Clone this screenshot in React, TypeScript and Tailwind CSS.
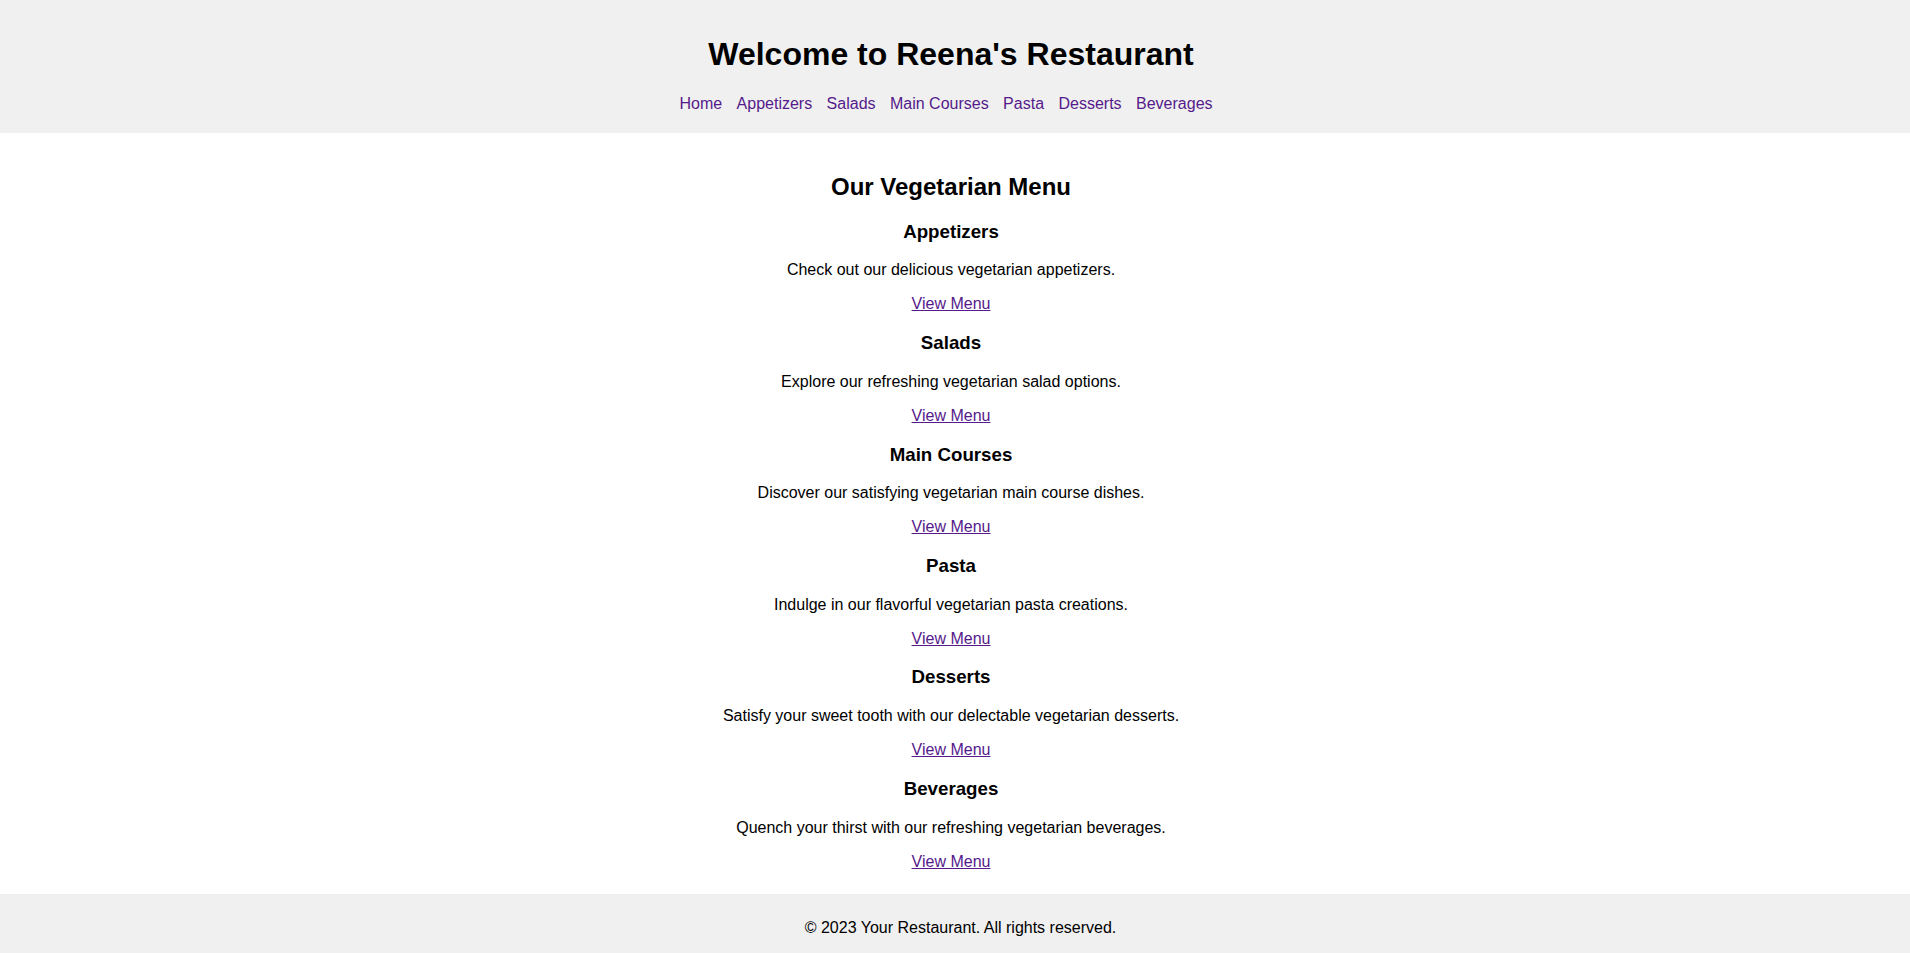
import React from "react";

const navItems = [
  "Home",
  "Appetizers",
  "Salads",
  "Main Courses",
  "Pasta",
  "Desserts",
  "Beverages",
];

const sections = [
  { title: "Appetizers", text: "Check out our delicious vegetarian appetizers." },
  { title: "Salads", text: "Explore our refreshing vegetarian salad options." },
  { title: "Main Courses", text: "Discover our satisfying vegetarian main course dishes." },
  { title: "Pasta", text: "Indulge in our flavorful vegetarian pasta creations." },
  { title: "Desserts", text: "Satisfy your sweet tooth with our delectable vegetarian desserts." },
  { title: "Beverages", text: "Quench your thirst with our refreshing vegetarian beverages." },
];

const App = () => {
  return (
    <div className="font-['Liberation_Sans',Arial,sans-serif] leading-[normal] text-black text-base h-[953px] overflow-hidden flex flex-col">
      <header className="bg-[#f0f0f0] pt-[15px] pb-[20px] pr-[8px] text-center">
        <h1 className="text-[32px] font-bold my-[21.44px]">Welcome to Reena's Restaurant</h1>
        <nav className="flex justify-center gap-[14.45px] pr-[10px]">
          {navItems.map((item) => (
            <a key={item} href="#" className="text-[#551a8b]">
              {item}
            </a>
          ))}
        </nav>
      </header>

      <main className="pt-[20px] pb-[23px] pr-[8px] text-center">
        <h2 className="text-[24px] font-bold my-[19.92px]">Our Vegetarian Menu</h2>
        {sections.map((s) => (
          <div key={s.title}>
            <h3 className="text-[18.72px] font-bold my-[18.72px]">{s.title}</h3>
            <p className="my-4">{s.text}</p>
            <a href="#" className="text-[#551a8b] underline">
              View Menu
            </a>
          </div>
        ))}
      </main>

      <footer className="bg-[#f0f0f0] flex-1 pt-[25px] pl-[11px] text-center">
        <p>© 2023 Your Restaurant. All rights reserved.</p>
      </footer>
    </div>
  );
};

export default App;
